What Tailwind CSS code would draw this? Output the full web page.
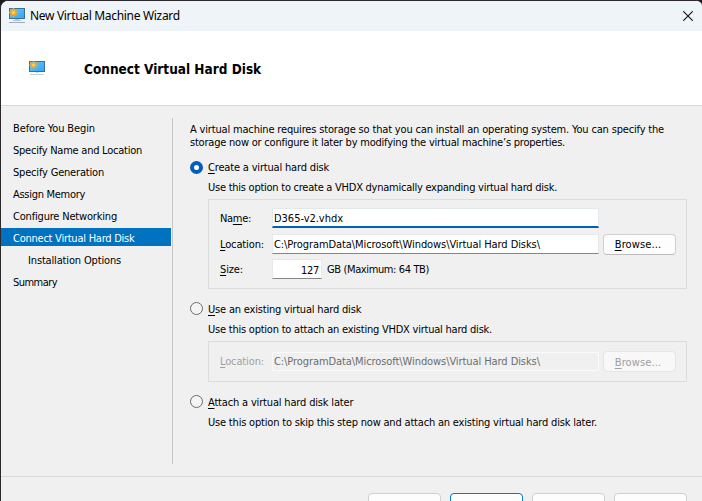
<!DOCTYPE html>
<html lang="en">
<head>
<meta charset="utf-8">
<title>New Virtual Machine Wizard</title>
<script src="https://cdn.jsdelivr.net/npm/@tailwindcss/browser@4"></script>
</head>
<body class="w-[702px] h-[501px] overflow-hidden bg-[#1c1a1e] font-['DejaVu_Sans_Condensed','Liberation_Sans',sans-serif] text-[11px] leading-[13px] text-black whitespace-nowrap">
<div class="w-[702px] h-[501px] border-t border-l border-[#2b282c] rounded-tl-[8px] rounded-tr-[6px] overflow-hidden bg-[#f0f0f0] flex flex-col">
  <header class="h-[30px] shrink-0 bg-[#eff4f9] flex items-center pl-2 pr-[9px]">
    <svg class="w-4 h-4 shrink-0" viewBox="0 0 16 16">
      <defs><linearGradient id="scr" x1="0" y1="0" x2="1" y2="1"><stop offset="0" stop-color="#6cc8fb"/><stop offset="1" stop-color="#2aa8f6"/></linearGradient></defs>
      <rect x=".5" y=".5" width="15" height="10" fill="url(#scr)" stroke="#3d6f91"/>
      <path d="M6 11h4v1H4v1h8v-1H6z" fill="#b4c4d2"/><rect y="14" width="16" height="1" fill="#9aaec0"/>
      <path d="M4.500 0v9M0 4.500h9M1.500 1.500l6 6M7.500 1.500l-6 6" stroke="#f9a41a" stroke-width="1.500"/><circle cx="4.500" cy="4.500" r="2.200" fill="#ffb52e"/><circle cx="4.500" cy="4.500" r="1" fill="#ffdf8a"/>
    </svg>
    <h1 class="ml-[5px] text-[12px] leading-4 font-['Noto_Sans',sans-serif] tracking-[-0.32px] grow">New Virtual Machine Wizard</h1>
    <svg class="w-[10px] h-[10px] -mt-px" viewBox="0 0 10 10" stroke="#111" stroke-width="1.100"><path d="M.3.3l9.400 9.400M9.700.3l-9.400 9.400"/></svg>
  </header>
  <section class="h-[75px] shrink-0 bg-white border-b border-[#d9d9d9] flex items-center pl-7">
    <svg class="w-4 h-[15px] shrink-0" viewBox="0 0 16 15">
      <rect x=".5" y=".5" width="15" height="10" fill="url(#scr)" stroke="#3d6f91"/>
      <rect x="7" y="11" width="2" height="1" fill="#b4d4ea"/><rect x="1" y="13" width="14" height="1" fill="#c3cfd9"/>
      <path d="M4.500 0v8M.5 4h8M1.500 1l6 6M7.500 1l-6 6" stroke="#f9a41a" stroke-width="1.500"/><circle cx="4.500" cy="4" r="2" fill="#ffb52e"/><circle cx="4.500" cy="4" r="1" fill="#ffdf8a"/>
    </svg>
    <h2 class="ml-[39px] mt-px text-[13.5px] leading-4 font-bold">Connect Virtual Hard Disk</h2>
  </section>
  <main class="h-[371px] shrink-0 flex border-b border-[#d9d9d9]">
    <nav class="w-[170px] shrink-0 pt-[12px] flex flex-col gap-1 *:h-[18px] *:pl-3 *:pt-[4px]">
      <div class="tracking-[-0.107px]">Before You Begin</div>
      <div class="tracking-[-0.243px]">Specify Name and Location</div>
      <div class="tracking-[-0.186px]">Specify Generation</div>
      <div class="tracking-[-0.29px]">Assign Memory</div>
      <div class="tracking-[-0.186px]">Configure Networking</div>
      <div class="tracking-[-0.243px] bg-[#0072c0] text-white">Connect Virtual Hard Disk</div>
      <div class="tracking-[-0.157px] pl-[27px]!">Installation Options</div>
      <div class="tracking-[-0.546px]">Summary</div>
    </nav>
    <div class="w-px ml-px mt-3 mb-[12px] bg-[#c8c8c8] shrink-0"></div>
    <div class="ml-[17px] w-[498px] pt-[17px]">
      <p class="tracking-[-0.169px]">A virtual machine requires storage so that you can install an operating system. You can specify the<br><span class="tracking-[-0.216px]">storage now or configure it later by modifying the virtual machine’s properties.</span></p>
      <div class="mt-[12px] flex items-center h-[13px]">
        <span class="w-[13px] h-[13px] rounded-full border-4 border-[#005fb8] bg-white"></span>
        <span class="ml-[5px] tracking-[-0.175px]"><u class="underline-offset-2">C</u>reate a virtual hard disk</span>
      </div>
      <p class="mt-[7px] ml-[18px] tracking-[-0.25px]">Use this option to create a VHDX dynamically expanding virtual hard disk.</p>
      <div class="mt-[5px] ml-[18px] w-[479px] h-[90px] border border-[#dcdcdc] pl-[11px] pt-[8px] flex flex-col">
        <div class="flex items-center h-[20px]">
          <span class="w-[52px] tracking-[-0.307px]">Na<u class="underline-offset-2">m</u>e:</span>
          <div class="w-[327px] h-[20px] bg-white border border-[#e3e8ee] border-b-2 border-b-[#005fb8] pl-[1px] pt-[3px] tracking-[-0.028px]">D365-v2.vhdx</div>
        </div>
        <div class="mt-[5px] flex items-center h-[22px]">
          <span class="w-[52px] tracking-[-0.13px]"><u class="underline-offset-2">L</u>ocation:</span>
          <div class="w-[327px] h-[20px] bg-white border border-[#e8e8e8] border-b-[#868686] pl-[1px] pt-[3px] tracking-[-0.08px]">C:\ProgramData\Microsoft\Windows\Virtual Hard Disks\</div>
          <button class="ml-[4px] w-[73px] h-[21px] rounded-[4px] bg-[#fdfdfd] border border-[#d0d0d0] border-b-[#bbb] tracking-[0.118px] pr-[3px] pt-px"><u class="underline-offset-2">B</u>rowse...</button>
        </div>
        <div class="mt-[4px] flex items-center h-[20px]">
          <span class="w-[52px] pt-px tracking-[-0.131px]"><u class="underline-offset-2">S</u>ize:</span>
          <div class="w-[50px] h-[20px] bg-white border border-[#e8e8e8] border-b-[#868686] pr-[2px] pt-[4px] text-right tracking-[-0.295px]">127</div>
          <span class="ml-[5px] pt-px tracking-[-0.375px]">GB (Maximum: 64 TB)</span>
        </div>
      </div>
      <div class="mt-[13px] flex items-center h-[13px]">
        <span class="w-[13px] h-[13px] rounded-full border border-[#6b6b6b] bg-[#f4f4f4]"></span>
        <span class="ml-[5px] pt-[2px] tracking-[-0.19px]"><u class="underline-offset-2">U</u>se an existing virtual hard disk</span>
      </div>
      <p class="mt-[8px] ml-[18px] tracking-[-0.226px]">Use this option to attach an existing VHDX virtual hard disk.</p>
      <div class="mt-[5px] ml-[18px] w-[479px] h-[41px] border border-[#dcdcdc] pl-[11px] flex items-center text-[#a0a0a0]">
        <span class="w-[52px] tracking-[-0.13px]"><u class="underline-offset-2">L</u>ocation:</span>
        <div class="w-[327px] h-[19px] border border-[#fafafa] pl-[1px] pt-[2px] text-[#6d6d6d] tracking-[-0.08px]">C:\ProgramData\Microsoft\Windows\Virtual Hard Disks\</div>
        <button class="ml-[4px] w-[73px] h-[21px] rounded-[4px] bg-[#f8f8f8] border border-[#e5e5e5] tracking-[0.118px] pr-[3px] pt-px"><u class="underline-offset-2">B</u>rowse...</button>
      </div>
      <div class="mt-[13px] flex items-center h-[13px]">
        <span class="w-[13px] h-[13px] rounded-full border border-[#6b6b6b] bg-[#f4f4f4]"></span>
        <span class="ml-[5px] pt-[2px] tracking-[-0.17px]"><u class="underline-offset-2">A</u>ttach a virtual hard disk later</span>
      </div>
      <p class="mt-[8px] ml-[18px] tracking-[-0.19px]">Use this option to skip this step now and attach an existing virtual hard disk later.</p>
    </div>
  </main>
  <footer class="shrink-0 pt-[16px] pl-[367px] flex gap-[9px] *:w-[73px] *:h-[23px] *:rounded-[4px] *:bg-[#fdfdfd] *:border *:border-[#d0d0d0] *:pt-[2px]">
    <button>&lt; Previous</button><button class="border-[#0078d4]!">Next &gt;</button><button>Finish</button><button>Cancel</button>
  </footer>
</div>
</body>
</html>
